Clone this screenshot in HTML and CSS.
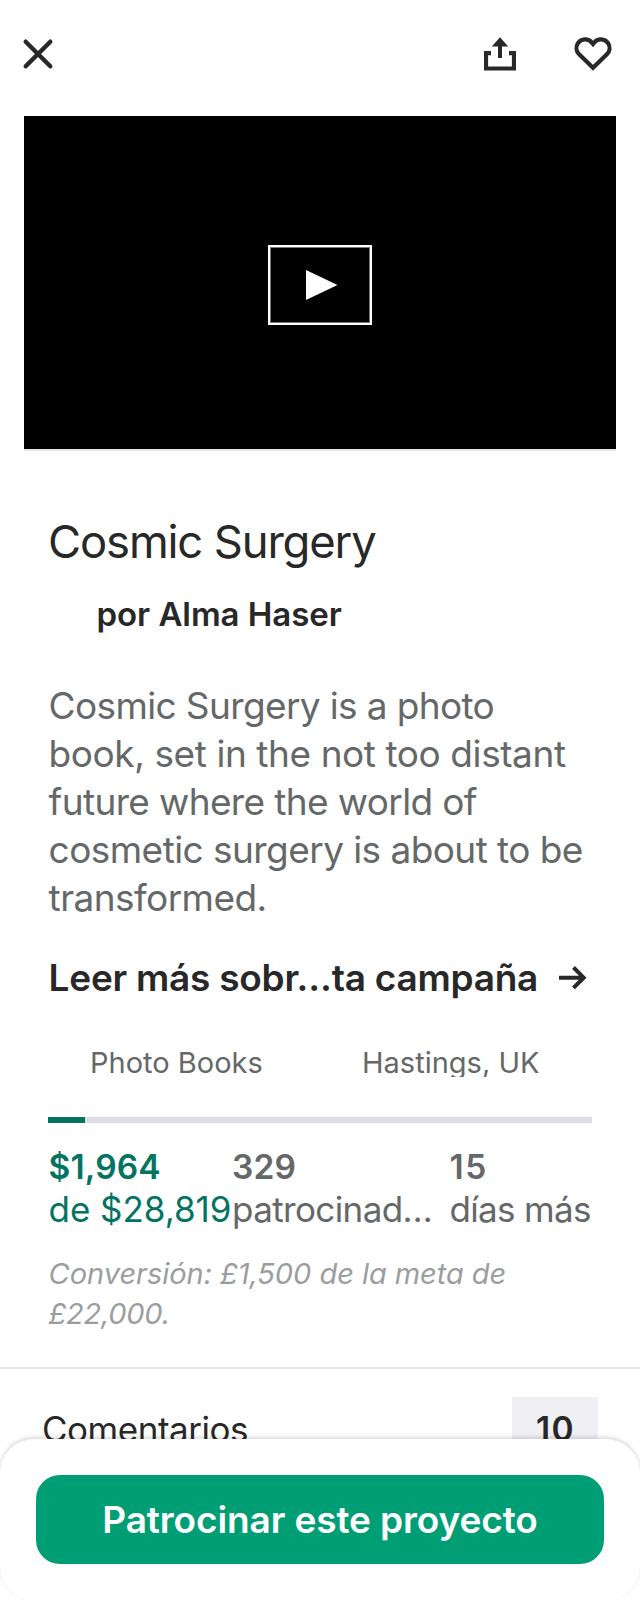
FILE: index.html
```html
<!DOCTYPE html>
<html lang="es">
<head>
<meta charset="utf-8">
<title>Cosmic Surgery</title>
<link rel="stylesheet" href="styles.css">
</head>
<body>
<div class="screen">
  <header class="topbar">
    <svg class="close" width="32" height="32" viewBox="0 0 32 32"><path d="M3.700 3.700 28.300 28.300M28.300 3.700 3.700 28.300" fill="none" stroke="#282828" stroke-width="4.400" stroke-linecap="round"/></svg>
    <div class="actions">
      <svg class="share" width="32" height="34" viewBox="0 0 32 34"><path d="M7 16.200H2V31.500H30V16.200H25" fill="none" stroke="#282828" stroke-width="4.200"/><path d="M14 21V9.500H7.800L16 .3 24.200 9.500H18V21Z" fill="#282828"/></svg>
      <svg class="heart" width="38" height="34" viewBox="0 0 38 34"><path d="M19 30.800 5.100 17.300A8.900 8.900 0 0 1 3.900 6.200C7.400 1.300 14.500 1.300 17.400 5.200L19 7.100 20.600 5.200C23.500 1.300 30.600 1.300 34.100 6.200A8.900 8.900 0 0 1 32.900 17.300Z" fill="none" stroke="#282828" stroke-width="4.200"/></svg>
    </div>
  </header>
  <div class="video">
    <div class="play"><svg width="32" height="30" viewBox="0 0 32 30"><path d="M0 0 31.500 15 0 30Z" fill="#fff"/></svg></div>
  </div>
  <main class="project">
    <h1 class="title">Cosmic Surgery</h1>
    <p class="author">por Alma Haser</p>
    <p class="blurb"><span class="tight">Cosmic Surgery is a photo</span><br><span class="loose">book, set in the not too distant</span><br><span class="tight">future where the world of</span><br>cosmetic surgery is about to be<br>transformed.</p>
    <div class="more">
      <span>Leer más sobr…ta campaña</span>
      <svg width="28" height="24" viewBox="0 0 28 24"><path d="M0 11.700H25M14.500 1.500 24.700 11.700 14.500 21.900" fill="none" stroke="#282828" stroke-width="4"/></svg>
    </div>
    <div class="meta">
      <span>Photo Books</span>
      <span>Hastings, UK</span>
    </div>
    <div class="progress"><div class="progress-fill"></div></div>
    <div class="stats">
      <div class="stat pledged"><b>$1,964</b><span>de $28,819</span></div>
      <div class="stat backers"><b>329</b><span>patrocinad…</span></div>
      <div class="stat days"><b>15</b><span>días más</span></div>
    </div>
    <p class="conversion">Conversión: £1,500 de la meta de<br><span class="goal">£22,000.</span></p>
  </main>
  <div class="comments">
    <span>Comentarios</span>
    <span class="count">10</span>
  </div>
  <footer class="sheet">
    <div class="pledge">Patrocinar este proyecto</div>
  </footer>
</div>
</body>
</html>
```
FILE: styles.css
```css
* { box-sizing: border-box; }
body { margin: 0; background: #fff; color: #282828; font-family: Inter, "Liberation Sans", sans-serif; }
h1, p { margin: 0; }
svg { display: block; flex: none; }
.screen { position: relative; width: 640px; height: 1600px; overflow: hidden; }

.topbar { display: flex; justify-content: space-between; align-items: flex-start; height: 116px; padding: 37px 28px 0 22px; }
.close { margin-top: 1px; }
.actions { display: flex; gap: 58px; }

.video { display: flex; align-items: center; justify-content: center; height: 335px; margin: 0 24px; background: #000; border-bottom: 2px solid #e6e6e6; }
.play { display: flex; align-items: center; width: 104px; height: 80px; margin-top: 5px; padding-left: 36px; border: 2px solid #fff; box-shadow: inset 0 0 0 1px #777; }

.project { padding: 63px 48px 33px; }
.title { font-size: 45.4px; line-height: 55px; padding-bottom: 1px; font-weight: 400; letter-spacing: -1.15px; white-space: nowrap; }
.author { margin-top: 24px; padding-left: 48.5px; font-size: 33px; line-height: 40px; font-weight: 600; letter-spacing: -0.05px; }
.blurb { margin-top: 48px; padding-left: 0.6px; font-size: 37px; line-height: 48px; letter-spacing: -0.56px; color: #656868; white-space: nowrap; }
.blurb .tight { letter-spacing: -0.63px; }
.blurb .loose { letter-spacing: -0.42px; }
.more { display: flex; justify-content: space-between; align-items: center; margin-top: 34px; padding: 0 5px 0 0.6px; font-size: 37px; line-height: 44px; font-weight: 600; letter-spacing: -0.25px; white-space: nowrap; }
.meta { display: grid; grid-template-columns: 272px 272px; height: 30px; margin-top: 47px; overflow: hidden; font-size: 29px; line-height: 31px; color: #656868; }
.meta span { padding-left: 42px; }
.progress { height: 6px; margin-top: 40px; background: #dcdee8; }
.progress-fill { width: 37px; height: 6px; background: #037362; }

.stats { display: grid; grid-template-columns: 184px 217.5px auto; margin-top: 24px; color: #656868; white-space: nowrap; }
.stat b { display: block; font-size: 33.5px; line-height: 41px; font-weight: 600; }
.stat span { display: block; font-size: 35px; line-height: 43px; }
.pledged { padding-left: 0.6px; color: #037362; }
.pledged b { letter-spacing: 0.1px; }
.pledged span { letter-spacing: -0.05px; }
.backers b { letter-spacing: 0.2px; }
.backers span { letter-spacing: -0.62px; }
.days b { letter-spacing: 1.6px; }
.days span { letter-spacing: -0.67px; }
.conversion { margin-top: 23px; padding-left: 0.6px; font-size: 29px; line-height: 40px; font-style: italic; letter-spacing: -0.05px; color: #9b9e9e; }
.conversion .goal { letter-spacing: -0.25px; }

.comments { display: flex; justify-content: space-between; align-items: center; height: 122px; padding: 0 42px; border-top: 2px solid #e6e6e6; font-size: 35px; line-height: 44px; letter-spacing: -0.48px; }
.count { width: 86px; height: 64px; padding-left: 1px; text-align: center; background: #efeff4; font-size: 33.5px; line-height: 64px; font-weight: 600; letter-spacing: 1.4px; }

.sheet { position: absolute; left: 0; right: 0; bottom: 0; height: 161px; padding: 36px; background: #fff; border-radius: 34px; box-shadow: 0 -2px 4px rgba(0, 0, 0, 0.15); }
.pledge { height: 89px; border-radius: 24px; background: #009e74; color: #fff; font-size: 37px; line-height: 89px; font-weight: 600; letter-spacing: -0.11px; text-align: center; }
```
